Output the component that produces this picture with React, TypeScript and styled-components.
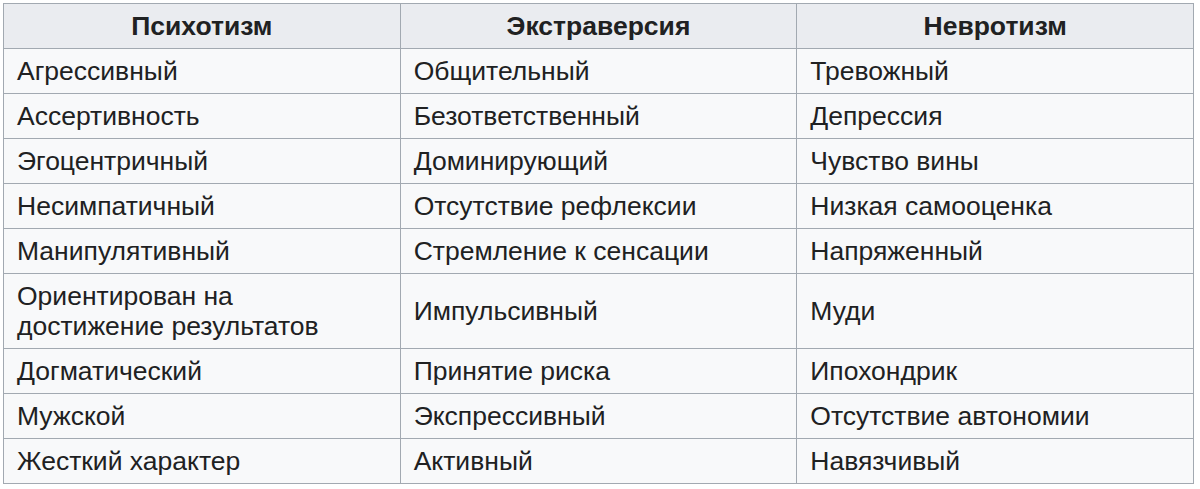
import React from "react";
import styled, { createGlobalStyle } from "styled-components";

const Global = createGlobalStyle`
  html, body { margin: 0; padding: 0; background: #ffffff; }
  body { font-family: "Liberation Sans", Arial, sans-serif; color: #202122; }
`;

const Page = styled.div`
  padding: 3px;
`;

const Table = styled.table`
  width: 1191px;
  border-collapse: collapse;
  table-layout: fixed;
  background: #f8f9fa;
  border: 1.5px solid #a2a9b1;
  font-size: 26.5px;
  line-height: 30px;
  color: #202122;
`;

const HeadCell = styled.th`
  background: #eaecf0;
  border: 1.5px solid #a2a9b1;
  padding: 7px 13px;
  font-weight: bold;
  text-align: center;
`;

const Cell = styled.td`
  border: 1.5px solid #a2a9b1;
  padding: 7px 13px;
  text-align: left;
  vertical-align: middle;
`;

const headers = ["Психотизм", "Экстраверсия", "Невротизм"];

const rows: [string, string, string][] = [
  ["Агрессивный", "Общительный", "Тревожный"],
  ["Ассертивность", "Безответственный", "Депрессия"],
  ["Эгоцентричный", "Доминирующий", "Чувство вины"],
  ["Несимпатичный", "Отсутствие рефлексии", "Низкая самооценка"],
  ["Манипулятивный", "Стремление к сенсации", "Напряженный"],
  ["Ориентирован на достижение результатов", "Импульсивный", "Муди"],
  ["Догматический", "Принятие риска", "Ипохондрик"],
  ["Мужской", "Экспрессивный", "Отсутствие автономии"],
  ["Жесткий характер", "Активный", "Навязчивый"],
];

export default function App() {
  return (
    <Page>
      <Global />
      <Table>
        <thead>
          <tr>
            {headers.map((h) => (
              <HeadCell key={h}>{h}</HeadCell>
            ))}
          </tr>
        </thead>
        <tbody>
          {rows.map((r, i) => (
            <tr key={i}>
              {r.map((c, j) => (
                <Cell key={j}>{c}</Cell>
              ))}
            </tr>
          ))}
        </tbody>
      </Table>
    </Page>
  );
}
